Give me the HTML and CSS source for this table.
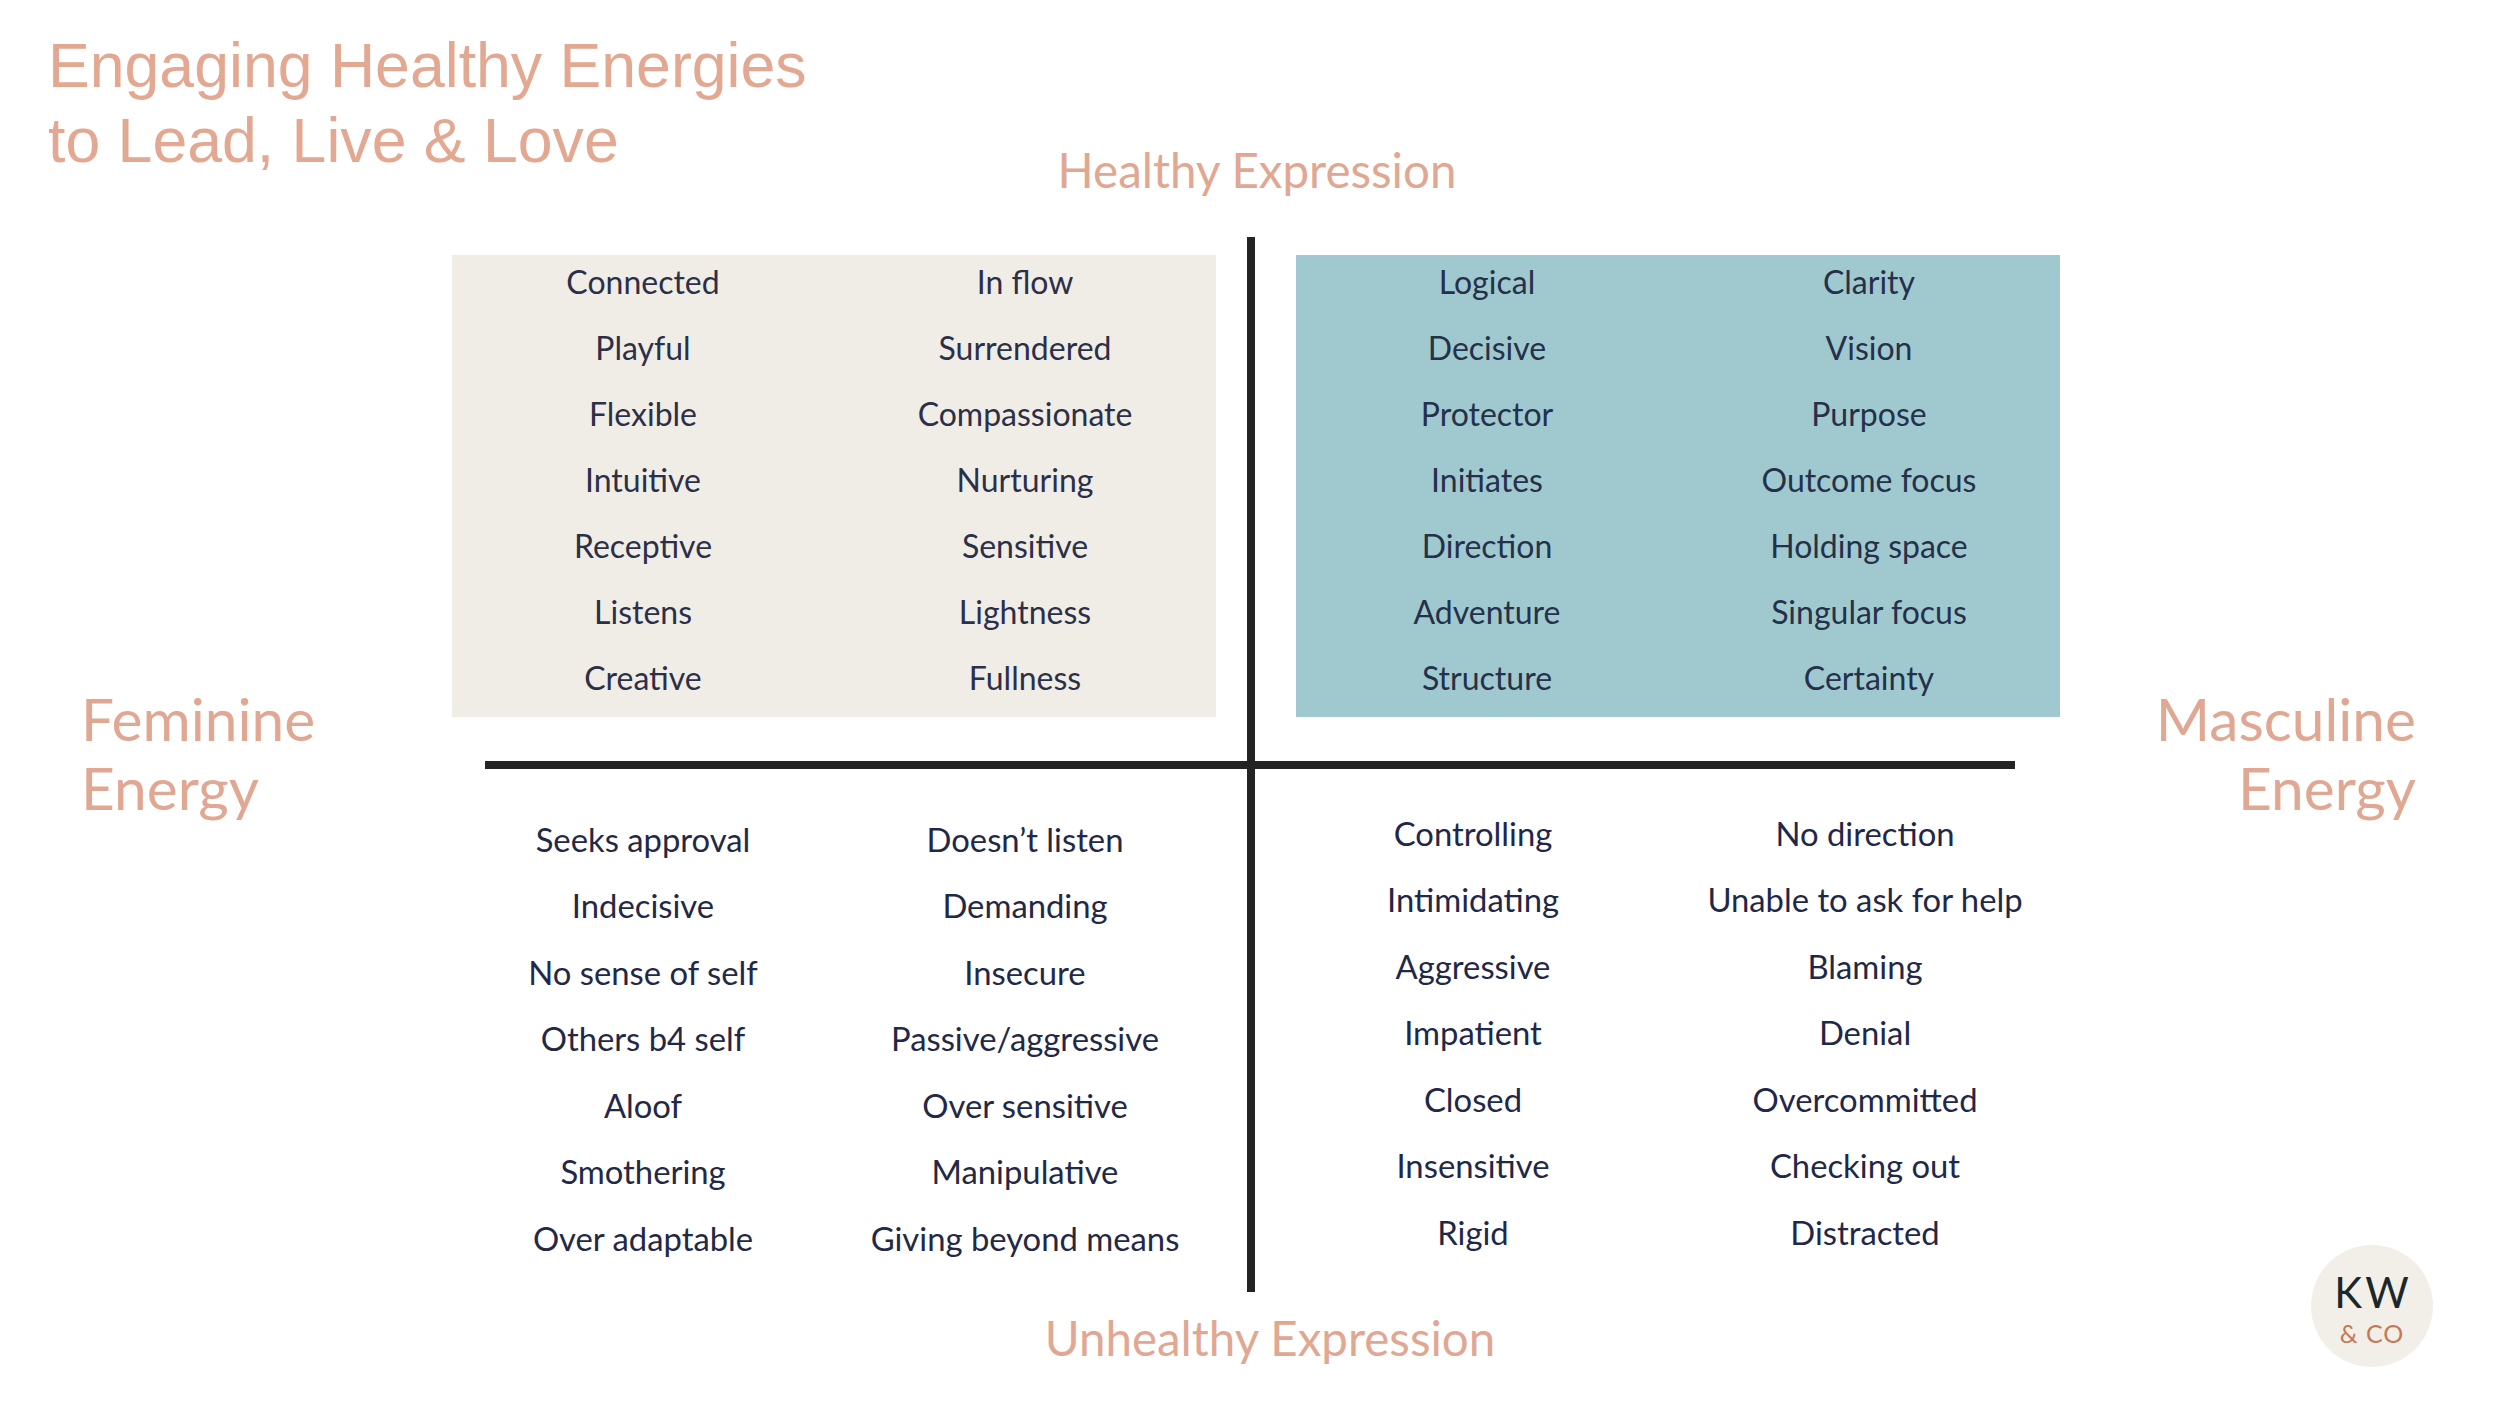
FILE: index.html
```html
<!DOCTYPE html>
<html lang="en">
<head>
<meta charset="utf-8">
<title>Engaging Healthy Energies</title>
<link rel="stylesheet" href="styles.css">
</head>
<body>
<main class="page">
  <header class="header">
    <h1 class="title">Engaging Healthy Energies<br>to Lead, Live &amp; Love</h1>
    <div class="axis-label axis-top">Healthy Expression</div>
    <div></div>
  </header>

  <section class="chart">
    <div class="side side-left">Feminine<br>Energy</div>

    <div class="quad quad-tl box box-beige">
      <span>Connected</span><span>In flow</span>
      <span>Playful</span><span>Surrendered</span>
      <span>Flexible</span><span>Compassionate</span>
      <span>Intuitive</span><span>Nurturing</span>
      <span>Receptive</span><span>Sensitive</span>
      <span>Listens</span><span>Lightness</span>
      <span>Creative</span><span>Fullness</span>
    </div>

    <div class="vline"></div>

    <div class="quad quad-tr box box-teal">
      <span>Logical</span><span>Clarity</span>
      <span>Decisive</span><span>Vision</span>
      <span>Protector</span><span>Purpose</span>
      <span>Initiates</span><span>Outcome focus</span>
      <span>Direction</span><span>Holding space</span>
      <span>Adventure</span><span>Singular focus</span>
      <span>Structure</span><span>Certainty</span>
    </div>

    <div class="side side-right">Masculine<br>Energy</div>

    <div class="hline"></div>

    <div class="quad quad-bl">
      <span>Seeks approval</span><span>Doesn’t listen</span>
      <span>Indecisive</span><span>Demanding</span>
      <span>No sense of self</span><span>Insecure</span>
      <span>Others b4 self</span><span>Passive/aggressive</span>
      <span>Aloof</span><span>Over sensitive</span>
      <span>Smothering</span><span>Manipulative</span>
      <span>Over adaptable</span><span>Giving beyond means</span>
    </div>

    <div class="quad quad-br">
      <span>Controlling</span><span>No direction</span>
      <span>Intimidating</span><span>Unable to ask for help</span>
      <span>Aggressive</span><span>Blaming</span>
      <span>Impatient</span><span>Denial</span>
      <span>Closed</span><span>Overcommitted</span>
      <span>Insensitive</span><span>Checking out</span>
      <span>Rigid</span><span>Distracted</span>
    </div>
  </section>

  <footer class="footer">
    <div></div>
    <div class="axis-label axis-bottom">Unhealthy Expression</div>
    <div class="logo-cell">
      <div class="logo">
        <span class="logo-kw">KW</span>
        <span class="logo-co">&amp; CO</span>
      </div>
    </div>
  </footer>
</main>
</body>
</html>
```

FILE: styles.css
```css
* { box-sizing: border-box; }

html, body {
  margin: 0;
  padding: 0;
  background: #ffffff;
}

.page {
  width: 2500px;
  height: 1406px;
  overflow: hidden;
  font-family: "Lato", "Open Sans", sans-serif;
  color: #2c2f48;
}

/* ---------- header ---------- */
.header {
  display: grid;
  grid-template-columns: 1fr auto 1fr;
  align-items: start;
  height: 237px;
}

.title {
  margin: 0;
  padding: 28px 0 0 48px;
  font-family: "Liberation Sans", Arial, sans-serif;
  font-weight: 400;
  font-size: 62.6px;
  line-height: 75px;
  color: #e2a891;
  white-space: nowrap;
}

.axis-label {
  font-family: "Lato", sans-serif;
  font-size: 47.5px;
  line-height: 60px;
  color: #e0a892;
  white-space: nowrap;
}

.axis-top {
  margin-top: 140px;
  padding-left: 14px;
}

/* ---------- chart ---------- */
.chart {
  display: grid;
  grid-template-columns: 452px 764px 31px 8px 41px 764px 1fr;
  grid-template-rows: 524px 8px 523px;
}

.side {
  grid-row: 1 / 4;
  align-self: start;
  margin-top: 447px;
  font-size: 58.6px;
  line-height: 69px;
  color: #e0a892;
}

.side-left {
  grid-column: 1;
  padding-left: 81px;
}

.side-right {
  grid-column: 7;
  text-align: right;
  padding-right: 84px;
}

.vline {
  grid-column: 4;
  grid-row: 1 / 4;
  background: #242424;
}

.hline {
  grid-column: 2 / 7;
  grid-row: 2;
  margin: 0 45px 0 33px;
  background: #242424;
}

.quad {
  display: grid;
  grid-template-columns: 1fr 1fr;
  grid-auto-rows: 66px;
  align-items: center;
  justify-items: center;
  font-size: 32px;
  white-space: nowrap;
}

.quad span {
  padding-bottom: 8px;
}

.box {
  align-self: start;
  margin-top: 18px;
  height: 462px;
}

.box span {
  padding-bottom: 14px;
}

.quad-tl { grid-column: 2; grid-row: 1; }
.quad-tr { grid-column: 6; grid-row: 1; }

.box-beige { background: #f0ede6; }
.box-teal { background: #a0c9cf; color: #25304a; }

.quad-bl {
  grid-column: 2;
  grid-row: 3;
  align-self: start;
  margin-top: 41px;
  grid-auto-rows: 66.5px;
  font-size: 32.8px;
  color: #232845;
}

.quad-br {
  grid-column: 6;
  grid-row: 3;
  align-self: start;
  margin-top: 35px;
  grid-auto-rows: 66.5px;
  grid-template-columns: 354px 410px;
  font-size: 32.8px;
  color: #1f2848;
}

.quad-br span:nth-child(even) {
  margin-left: 20px;
}

/* ---------- footer ---------- */
.footer {
  display: grid;
  grid-template-columns: 1fr auto 1fr;
  align-items: start;
}

.axis-bottom {
  margin-top: 16px;
  margin-left: 40px;
}

.logo-cell {
  display: flex;
  justify-content: flex-end;
  padding-right: 67px;
}

.logo {
  width: 122px;
  height: 122px;
  margin-top: -47px;
  border-radius: 50%;
  background: #f2efe9;
  display: flex;
  flex-direction: column;
  align-items: center;
  justify-content: center;
  padding-top: 2px;
}

.logo-kw {
  font-family: "Lato", sans-serif;
  font-size: 42px;
  line-height: 51px;
  letter-spacing: 3px;
  color: #1b282b;
  margin-left: 2px;
}

.logo-co {
  font-family: "Lato", sans-serif;
  font-weight: 400;
  font-size: 25px;
  line-height: 30px;
  letter-spacing: 1px;
  color: #c47a58;
}
```
